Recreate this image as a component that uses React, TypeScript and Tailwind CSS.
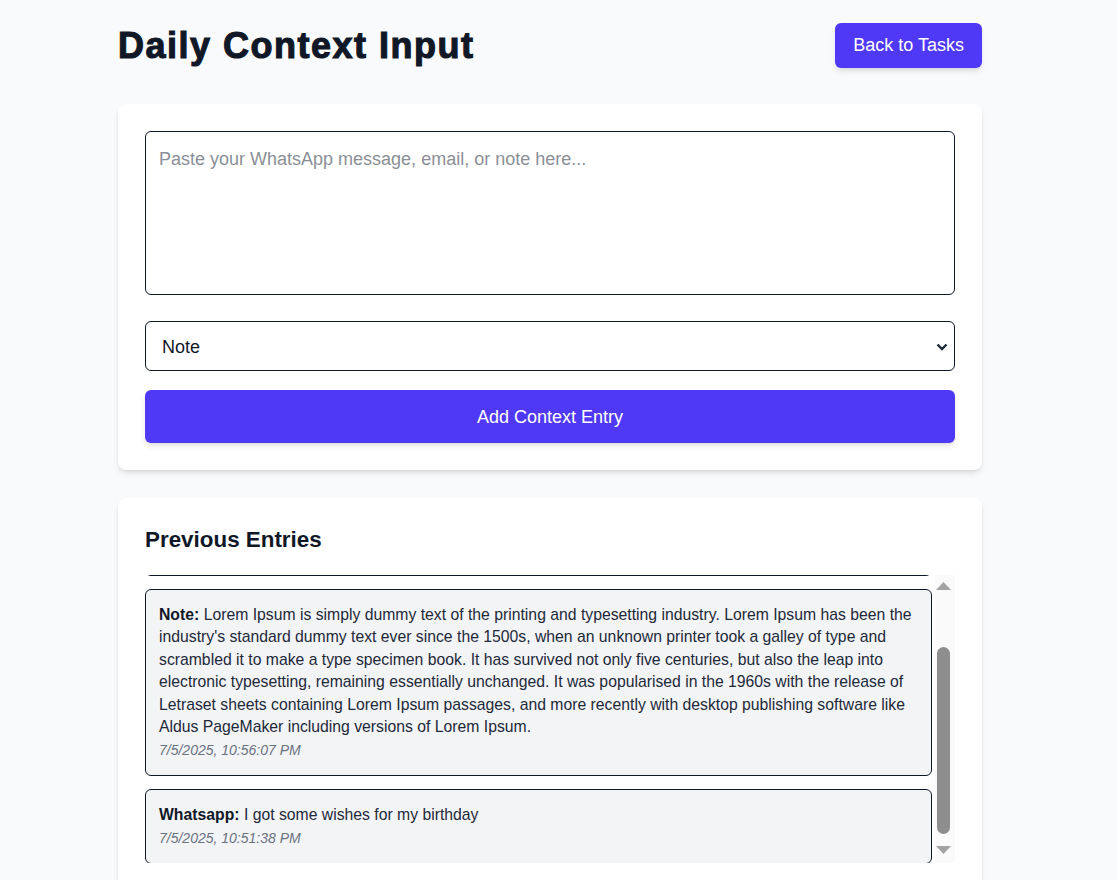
import { useState } from 'react';

type Entry = {
  type: string;
  text: string;
  time: string;
};

const entries: Entry[] = [
  {
    type: 'Note',
    text: "Lorem Ipsum is simply dummy text of the printing and typesetting industry. Lorem Ipsum has been the industry's standard dummy text ever since the 1500s, when an unknown printer took a galley of type and scrambled it to make a type specimen book. It has survived not only five centuries, but also the leap into electronic typesetting, remaining essentially unchanged. It was popularised in the 1960s with the release of Letraset sheets containing Lorem Ipsum passages, and more recently with desktop publishing software like Aldus PageMaker including versions of Lorem Ipsum.",
    time: '7/5/2025, 10:56:07 PM',
  },
  {
    type: 'Whatsapp',
    text: 'I got some wishes for my birthday',
    time: '7/5/2025, 10:51:38 PM',
  },
];

function EntryCard({ entry }: { entry: Entry }) {
  return (
    <div className="rounded-md border border-gray-900 bg-gray-100 px-[13px] pb-[14px] pt-[14px] text-[15.75px] leading-[22.4px] text-gray-800">
      <p>
        <span className="font-bold text-gray-900">{entry.type}:</span> {entry.text}
      </p>
      <p className="mt-[3px] text-sm italic leading-[1.4] text-gray-500">{entry.time}</p>
    </div>
  );
}

function FakeScrollbar() {
  return (
    <div className="ml-[3px] flex w-[20px] flex-col items-start bg-[#fafafa] pl-[1px]">
      <svg width="15" height="8" viewBox="0 0 15 8" className="mt-[7px] shrink-0">
        <path d="M7.5 0 L15 8 L0 8 Z" fill="#a3a3a3" />
      </svg>
      <div className="ml-[1px] mt-[57px] h-[187px] w-[13px] shrink-0 rounded-full bg-[#8e8e8e]" />
      <svg width="15" height="8" viewBox="0 0 15 8" className="mt-[12px] shrink-0">
        <path d="M0 0 L15 0 L7.5 8 Z" fill="#a3a3a3" />
      </svg>
    </div>
  );
}

export default function App() {
  const [text, setText] = useState('');
  const [kind, setKind] = useState('note');

  return (
    <div
      className="h-screen overflow-hidden bg-gray-50 pr-[17px] text-gray-900"
      style={{ fontFamily: '"Liberation Sans", Arial, sans-serif' }}
    >
      <div className="mx-auto max-w-4xl px-4 pt-[23px]">
        <div className="mb-9 flex items-center justify-between">
          <h1 className="pt-[1px] text-[36px] font-bold leading-10 tracking-[1.5px] text-gray-900 [-webkit-text-stroke:1.1px_#111827]">
            Daily Context Input
          </h1>
          <button className="h-[45px] rounded-md bg-indigo-600 px-[18px] pb-[2px] text-lg text-white shadow-md">
            Back to Tasks
          </button>
        </div>

        <div className="flex flex-col rounded-lg bg-white p-[27px] shadow-md">
          <textarea
            value={text}
            onChange={(e) => setText(e.target.value)}
            placeholder="Paste your WhatsApp message, email, or note here..."
            className="block h-[164px] w-full resize-none rounded-md border border-gray-900 p-[13px] text-lg leading-7 text-gray-900 outline-none placeholder:text-[#8b8f97]"
          />
          <div className="relative mt-[26px]">
            <select
              value={kind}
              onChange={(e) => setKind(e.target.value)}
              className="block h-[50px] w-full appearance-none rounded-md border border-gray-900 bg-white px-4 pt-[2px] text-lg text-gray-900 outline-none"
            >
              <option value="note">Note</option>
              <option value="whatsapp">Whatsapp</option>
              <option value="email">Email</option>
            </select>
            <svg
              width="12"
              height="8"
              viewBox="0 0 12 8"
              className="pointer-events-none absolute right-[7px] top-[22px]"
            >
              <path d="M1.5 1.5 L6 6 L10.5 1.5" fill="none" stroke="#1f2937" strokeWidth="2.4" />
            </svg>
          </div>
          <button className="mt-[19px] h-[53px] w-full rounded-md bg-indigo-600 text-lg text-white shadow-md">
            Add Context Entry
          </button>
        </div>

        <div className="mt-[28px] rounded-lg bg-white p-[27px] shadow-md">
          <h2 className="mb-5 text-[22.4px] font-bold leading-[30px] text-gray-900">Previous Entries</h2>
          <div className="flex h-[288px] overflow-hidden">
            <div className="flex flex-1 flex-col gap-[13px] overflow-hidden">
              <div className="-mt-[99px] h-[100px] shrink-0 rounded-md border border-gray-900 bg-gray-100" />
              {entries.map((entry) => (
                <EntryCard key={entry.time} entry={entry} />
              ))}
            </div>
            <FakeScrollbar />
          </div>
        </div>
      </div>
    </div>
  );
}
